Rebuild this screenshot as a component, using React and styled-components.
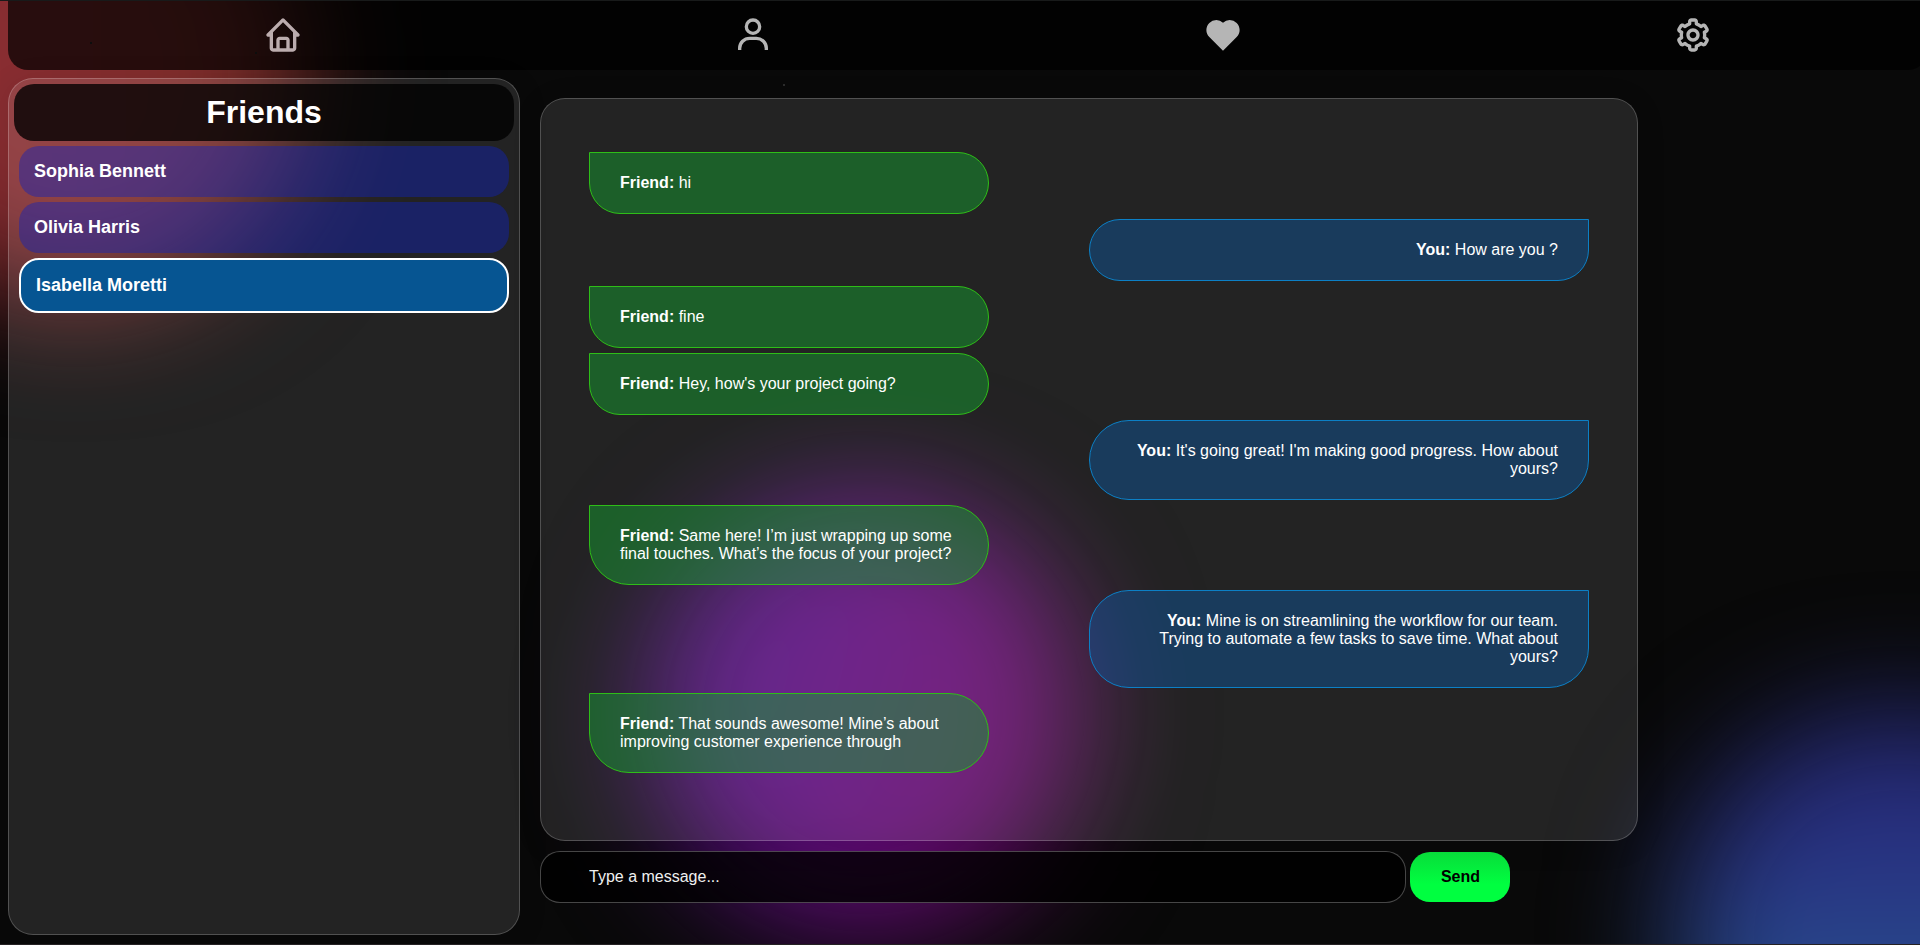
import React from "react";
import styled, { createGlobalStyle, css } from "styled-components";

const GlobalStyle = createGlobalStyle`
  *, *::before, *::after { box-sizing: border-box; }
  html, body { margin: 0; padding: 0; background: #090909; }
  body { overflow: hidden; font-family: "Liberation Sans", Arial, Helvetica, sans-serif; color: #fff; }
`;

const Page = styled.div`
  position: relative;
  height: 945px;
  overflow: hidden;
  display: flex;
  flex-direction: column;
  background: #090909;
  border-top: 1px solid #181a1a;
  border-bottom: 1px solid #252123;
`;

const Backdrop = styled.div`
  position: absolute;
  inset: 0;
  overflow: hidden;
`;

const Glow = styled.div`
  position: absolute;
  left: ${(p) => p.$x - p.$r}px;
  top: ${(p) => p.$y - p.$r}px;
  width: ${(p) => p.$r * 2}px;
  height: ${(p) => p.$r * 2}px;
  border-radius: 50%;
  background: ${(p) => p.$fill};
  filter: blur(60px);
`;

const Star = styled.i`
  position: absolute;
  left: ${(p) => p.$x}px;
  top: ${(p) => p.$y}px;
  width: 2px;
  height: 2px;
  background: #2c2c2c;
`;

const Nav = styled.nav`
  position: relative;
  flex: none;
  width: 1920px;
  height: 69px;
  margin-left: 8px;
  padding: 0 0 1px 40px;
  display: flex;
  align-items: center;
  background: rgba(0, 0, 0, 0.7);
  border-radius: 0 0 20px 20px;
`;

const NavItem = styled.a`
  flex: 1;
  display: flex;
  justify-content: center;
  opacity: 0.71;

  svg { display: block; width: 40px; height: 40px; fill: ${(p) => (p.$current ? "#fff0f2" : "#fff")}; }
`;

const Main = styled.main`
  position: relative;
  flex: 1;
  display: flex;
  align-items: flex-start;
  gap: 20px;
  padding: 8px 0 0 8px;
`;

const glass = css`
  background: rgba(255, 255, 255, 0.107);
  border: 1px solid rgba(255, 255, 255, 0.21);
  border-radius: 25px;
  box-shadow: 0 4px 30px rgba(0, 0, 0, 0.1);
`;

const Sidebar = styled.aside`
  ${glass}
  width: 512px;
  height: 857px;
  padding: 5px;
`;

const SidebarTitle = styled.h1`
  margin: 0 0 5px;
  height: 57px;
  display: flex;
  align-items: center;
  justify-content: center;
  font-size: 32px;
  line-height: 37px;
  background: rgba(0, 0, 0, 0.78);
  border-radius: 20px;
`;

const FriendList = styled.div`
  display: flex;
  flex-direction: column;
  gap: 5px;
  padding: 0 5px;
`;

const Friend = styled.div`
  padding: 15px;
  font-size: 18px;
  font-weight: 700;
  line-height: 21px;
  border-radius: 20px;
  background: ${(p) => (p.$active ? "#065592" : "rgba(15, 35, 187, 0.44)")};
  border: ${(p) => (p.$active ? "2px solid #fff" : "none")};
`;

const Chat = styled.section`
  display: flex;
  flex-direction: column;
  gap: 10px;
  padding-top: 20px;
`;

const Messages = styled.div`
  ${glass}
  width: 1098px;
  height: 743px;
  padding: 53px 48px 0;
  display: flex;
  flex-direction: column;
  gap: 5px;
`;

const Bubble = styled.p`
  margin: 0;
  padding: 21px 30px;
  font-size: 16px;
  line-height: 18px;
  ${(p) =>
    p.$mine
      ? css`
          align-self: flex-end;
          width: 50%;
          text-align: right;
          background: rgba(15, 84, 150, 0.5);
          border: 1px solid #0c80c6;
          border-radius: 40px 0 40px 40px;
        `
      : css`
          width: 40%;
          background: rgba(21, 155, 48, 0.5);
          border: 1px solid #2ebe18;
          border-radius: 0 40px 40px 40px;
        `}
`;

const Composer = styled.form`
  display: flex;
  align-items: center;
  gap: 4px;
`;

const MessageInput = styled.input`
  width: 866px;
  height: 52px;
  padding: 0 48px;
  font: 16px "Liberation Sans", Arial, sans-serif;
  color: #fff;
  background: rgba(0, 0, 0, 0.8);
  border: 1px solid rgba(255, 255, 255, 0.27);
  border-radius: 20px;
  outline: none;

  &::placeholder { color: #f0f0f0; opacity: 1; }
`;

const SendButton = styled.button`
  width: 100px;
  height: 50px;
  padding: 0 0 0 1px;
  border: 0;
  border-radius: 20px;
  font: 700 16px "Liberation Sans", Arial, sans-serif;
  color: #000;
  background: linear-gradient(#08dc3a, #00ff40 65%);
`;

const ICONS = [
  ["Home", "M3 13h1v7c0 1.103.897 2 2 2h12c1.103 0 2-.897 2-2v-7h1a1 1 0 0 0 .707-1.707l-9-9a.999.999 0 0 0-1.414 0l-9 9A1 1 0 0 0 3 13zm7 7v-5h4v5h-4zm2-15.586 6 6V15l.001 5H16v-5c0-1.103-.897-2-2-2h-4c-1.103 0-2 .897-2 2v5H6v-9.586l6-6z"],
  ["Profile", "M12 2a5 5 0 1 0 5 5 5 5 0 0 0-5-5zm0 8a3 3 0 1 1 3-3 3 3 0 0 1-3 3zm9 11v-1a7 7 0 0 0-7-7h-4a7 7 0 0 0-7 7v1h2v-1a5 5 0 0 1 5-5h4a5 5 0 0 1 5 5v1z"],
  ["Likes", "M20.205 4.791a5.938 5.938 0 0 0-4.209-1.754A5.906 5.906 0 0 0 12 4.595a5.904 5.904 0 0 0-3.996-1.558 5.942 5.942 0 0 0-4.213 1.758c-2.353 2.363-2.352 6.059.002 8.412L12 21.414l8.207-8.207c2.354-2.353 2.355-6.049-.002-8.416z"],
  ["Settings", "M12 16c2.206 0 4-1.794 4-4s-1.794-4-4-4-4 1.794-4 4 1.794 4 4 4zm0-6c1.084 0 2 .916 2 2s-.916 2-2 2-2-.916-2-2 .916-2 2-2z M2.845 16.136l1 1.73c.531.917 1.809 1.261 2.73.73l.529-.306A8.1 8.1 0 0 0 9 19.402V20c0 1.103.897 2 2 2h2c1.103 0 2-.897 2-2v-.598a8.132 8.132 0 0 0 1.896-1.111l.529.306c.923.53 2.198.188 2.731-.731l.999-1.729a2.001 2.001 0 0 0-.731-2.732l-.505-.292a7.718 7.718 0 0 0 0-2.224l.505-.292a2.002 2.002 0 0 0 .731-2.732l-.999-1.729c-.531-.92-1.808-1.265-2.731-.732l-.529.306A8.1 8.1 0 0 0 15 4.598V4c0-1.103-.897-2-2-2h-2c-1.103 0-2 .897-2 2v.598a8.132 8.132 0 0 0-1.896 1.111l-.529-.306c-.924-.531-2.2-.187-2.731.732l-.999 1.729a2.001 2.001 0 0 0 .731 2.732l.505.292a7.683 7.683 0 0 0 0 2.223l-.505.292a2.003 2.003 0 0 0-.731 2.733zm3.326-2.758A5.703 5.703 0 0 1 6 12c0-.462.058-.926.17-1.378a.999.999 0 0 0-.47-1.108l-1.123-.65.998-1.729 1.145.662a.997.997 0 0 0 1.188-.142 6.071 6.071 0 0 1 2.384-1.399A1 1 0 0 0 11 5.3V4h2v1.3a1 1 0 0 0 .708.956 6.083 6.083 0 0 1 2.384 1.399.999.999 0 0 0 1.188.142l1.144-.661 1 1.729-1.124.649a1 1 0 0 0-.47 1.108c.112.452.17.916.17 1.378 0 .461-.058.925-.171 1.378a1 1 0 0 0 .471 1.108l1.123.649-.998 1.729-1.145-.661a.996.996 0 0 0-1.188.142 6.071 6.071 0 0 1-2.384 1.399A1 1 0 0 0 13 18.7l.002 1.3H11v-1.3a1 1 0 0 0-.708-.956 6.083 6.083 0 0 1-2.384-1.399.992.992 0 0 0-1.188-.141l-1.144.662-1-1.729 1.124-.651a1 1 0 0 0 .471-1.108z"],
];

const FRIENDS = ["Sophia Bennett", "Olivia Harris", "Isabella Moretti"];

const MESSAGES = [
  ["Friend", "hi"],
  ["You", "How are you ?"],
  ["Friend", "fine"],
  ["Friend", "Hey, how's your project going?"],
  ["You", "It's going great! I'm making good progress. How about yours?"],
  ["Friend", "Same here! I’m just wrapping up some final touches. What’s the focus of your project?"],
  ["You", "Mine is on streamlining the workflow for our team. Trying to automate a few tasks to save time. What about yours?"],
  ["Friend", "That sounds awesome! Mine’s about improving customer experience through"],
];

export default function App() {
  return (
    <Page>
      <GlobalStyle />
      <Backdrop>
        <Glow $x={76} $y={70} $r={232} $fill="linear-gradient(90deg, #8f2c36, #7c2e28)" />
        <Glow $x={866} $y={712} $r={218} $fill="linear-gradient(105deg, #500f82 15%, #620a78 55%, #680a5c)" />
        <Glow $x={1900} $y={935} $r={226} $fill="linear-gradient(#262a78 10%, #283282 35%, #284c8c 60%)" />
        <Star $x={783} $y={83} />
        <Star $x={90} $y={41} />
        <Star $x={255} $y={51} />
      </Backdrop>
      <Nav>
        {ICONS.map(([label, d], i) => (
          <NavItem key={label} aria-label={label} $current={i === 0}>
            <svg viewBox="0 0 24 24"><path d={d} /></svg>
          </NavItem>
        ))}
      </Nav>
      <Main>
        <Sidebar>
          <SidebarTitle>Friends</SidebarTitle>
          <FriendList>
            {FRIENDS.map((name, i) => (
              <Friend key={name} $active={i === 2}>{name}</Friend>
            ))}
          </FriendList>
        </Sidebar>
        <Chat>
          <Messages>
            {MESSAGES.map(([who, text], i) => (
              <Bubble key={i} $mine={who === "You"}>
                <strong>{who}:</strong> {text}
              </Bubble>
            ))}
          </Messages>
          <Composer>
            <MessageInput placeholder="Type a message..." />
            <SendButton type="button">Send</SendButton>
          </Composer>
        </Chat>
      </Main>
    </Page>
  );
}
